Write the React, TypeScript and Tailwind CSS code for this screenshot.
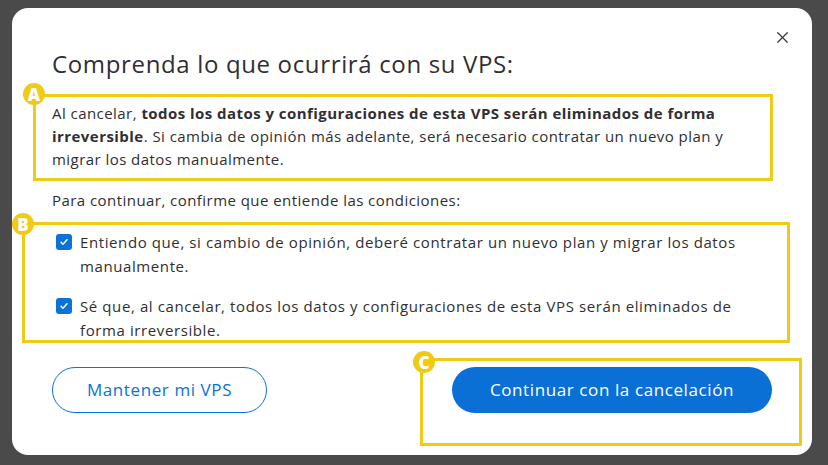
import { X } from 'lucide-react';

const font = { fontFamily: '"Open Sans", "Noto Sans", sans-serif' };

function Marker({ letter, className }: { letter: string; className: string }) {
  return (
    <div
      className={`absolute flex h-[22px] w-[22px] items-center justify-center rounded-full bg-[#efcb16] text-[17px] font-extrabold leading-none text-white ${className}`}
    >
      {letter}
    </div>
  );
}

function CheckItem({ children }: { children: React.ReactNode }) {
  return (
    <label className="flex items-start gap-2 pl-1">
      <span className="mt-1 flex h-4 w-4 shrink-0 items-center justify-center rounded-[3px] bg-[#0b72d8]">
        <svg width="10" height="10" viewBox="0 0 10 10" fill="none">
          <path d="M2 5.2l2 2 4-4.4" stroke="white" strokeWidth="1.5" strokeLinecap="round" strokeLinejoin="round" />
        </svg>
      </span>
      <span className="text-[15px] leading-6 tracking-[0.6px] text-[#2f2f33]">{children}</span>
    </label>
  );
}

export default function App() {
  return (
    <div className="h-[465px] w-[828px] bg-[#4a4a4a] pl-3 pt-2" style={font}>
      <div className="relative h-[447px] w-[800px] rounded-2xl bg-white px-10 pt-[41px]">
        <button className="absolute right-[20px] top-[20px] text-[#3a3a3e]">
          <X className="h-[19px] w-[19px]" strokeWidth={1.5} />
        </button>

        <h2 className="text-[24px] leading-[30px] tracking-[0.65px] text-[#2f2f33]">Comprenda lo que ocurrirá con su VPS:</h2>

        <div className="mt-[23px] pr-8 text-[15px] leading-[23px] tracking-[0.45px] text-[#2f2f33]">
          Al cancelar, <b className="font-bold">todos los datos y configuraciones de esta VPS serán eliminados de forma irreversible</b>. Si cambia de opinión más adelante, será necesario contratar un nuevo plan y migrar los datos manualmente.
        </div>

        <div className="mt-[18px] text-[15px] leading-[23px] tracking-[0.45px] text-[#2f2f33]">Para continuar, confirme que entiende las condiciones:</div>

        <div className="mt-[18px] flex flex-col gap-4 pr-3">
          <CheckItem>Entiendo que, si cambio de opinión, deberé contratar un nuevo plan y migrar los datos manualmente.</CheckItem>
          <CheckItem>Sé que, al cancelar, todos los datos y configuraciones de esta VPS serán eliminados de forma irreversible.</CheckItem>
        </div>

        <div className="mt-[25px] flex items-center justify-between">
          <button className="h-[46px] w-[215px] rounded-full border border-[#0b72d8] text-[17px] font-medium tracking-[0.6px] text-[#0b72d8]">
            Mantener mi VPS
          </button>
          <button className="h-[46px] w-[320px] rounded-full bg-[#0a70d6] text-[17px] font-medium tracking-[0.6px] text-white">
            Continuar con la cancelación
          </button>
        </div>

        {/* annotation overlays */}
        <div className="pointer-events-none absolute left-[21px] top-[86px] h-[87px] w-[740px] border-[3px] border-[#efcb16]" />
        <Marker letter="A" className="left-[11px] top-[75px]" />
        <div className="pointer-events-none absolute left-[10px] top-[214px] h-[121px] w-[768px] border-[3px] border-[#efcb16]" />
        <Marker letter="B" className="left-0 top-[205px]" />
        <div className="pointer-events-none absolute left-[408px] top-[350px] h-[88px] w-[382px] border-[3px] border-[#efcb16]" />
        <Marker letter="C" className="left-[401px] top-[343px]" />
      </div>
    </div>
  );
}
